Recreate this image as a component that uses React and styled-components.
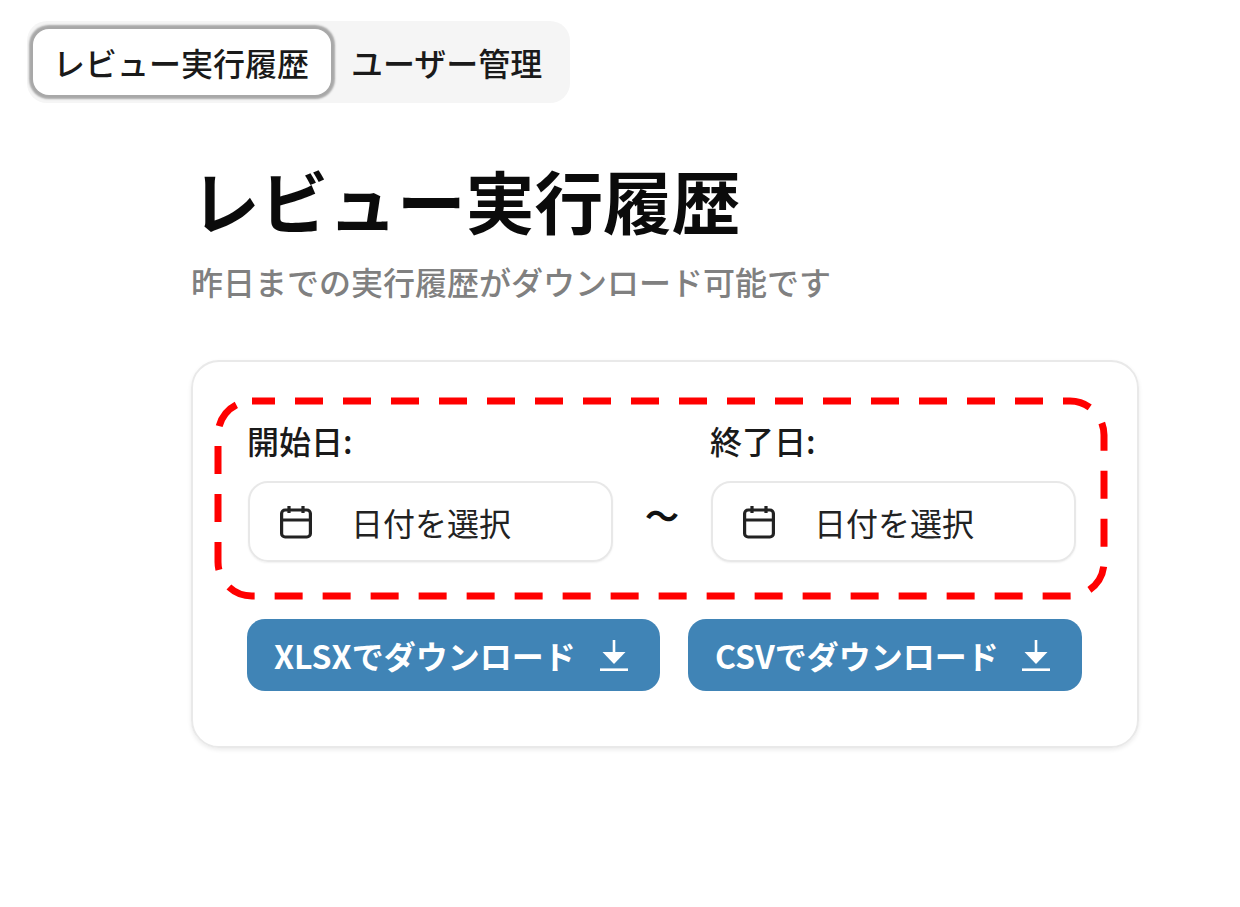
import styled, { createGlobalStyle } from "styled-components";

const GlobalStyle = createGlobalStyle`
  html, body {
    margin: 0;
    padding: 0;
    background: #fff;
    font-family: "Noto Sans CJK JP", "Noto Sans", sans-serif;
    color: #111;
  }
`;

const Page = styled.div`
  width: 1240px;
  height: 907px;
  padding: 21px 0 0 27px;
  box-sizing: border-box;
  overflow: hidden;
`;

const TabList = styled.div`
  display: inline-flex;
  align-items: center;
  height: 82px;
  width: 543px;
  box-sizing: border-box;
  padding: 0 6px;
  background: #f5f5f5;
  border-radius: 20px;
`;

const Tab = styled.button`
  display: flex;
  align-items: center;
  justify-content: center;
  height: ${(p) => (p.$active ? "66px" : "72px")};
  width: ${(p) => (p.$active ? "298px" : "auto")};
  padding: ${(p) => (p.$active ? "0 2px 0 0" : "0 0 0 20px")};
  border: none;
  border-radius: 16px;
  background: ${(p) => (p.$active ? "#fff" : "transparent")};
  box-shadow: ${(p) => (p.$active ? "0 0 2px 4px #a8a8a8" : "none")};
  box-sizing: border-box;
  font: 500 32px/1 "Noto Sans CJK JP", sans-serif;
  color: #1a1a1a;
  white-space: nowrap;
`;

const Content = styled.main`
  width: 948px;
  margin: 46px 0 0 164px;
`;

const Title = styled.h1`
  margin: 0;
  font: 700 68.7px/100px "Noto Sans CJK JP", sans-serif;
  color: #0b0b0b;
`;

const Subtitle = styled.p`
  margin: 9px 0 0;
  font: 500 32px/46px "Noto Sans CJK JP", sans-serif;
  color: #808080;
`;

const Card = styled.section`
  position: relative;
  box-sizing: border-box;
  height: 388px;
  margin-top: 56px;
  padding: 56px 0 0 55px;
  border: 2px solid #e9e9e9;
  border-radius: 28px;
  box-shadow: 0 2px 4px rgba(0, 0, 0, 0.08);
`;

const DateRow = styled.div`
  display: flex;
  align-items: flex-end;
`;

const Field = styled.div`
  display: flex;
  flex-direction: column;
  width: 365px;
`;

const Label = styled.label`
  font: 500 32px/44px "Noto Sans CJK JP", sans-serif;
  color: #1a1a1a;
  margin-left: -1px;
  margin-bottom: 19px;
`;

const DateInput = styled.div`
  display: flex;
  align-items: center;
  gap: 39px;
  box-sizing: border-box;
  height: 81px;
  padding: 0 0 0 30px;
  border: 2px solid #e8e8e8;
  border-radius: 20px;
  box-shadow: 0 1px 2px rgba(0, 0, 0, 0.06);
  font: 400 32px/1 "Noto Sans CJK JP", sans-serif;
  color: #222;
`;

const Tilde = styled.span`
  width: 98px;
  height: 81px;
  display: flex;
  justify-content: center;
  align-items: center;
  font: 700 34px/1 "Noto Sans CJK JP", sans-serif;
  color: #111;
  padding-bottom: 14px;
  box-sizing: border-box;
`;

const ButtonRow = styled.div`
  display: flex;
  gap: 28px;
  margin-top: 57px;
  margin-left: -1px;
`;

const DownloadButton = styled.button`
  display: flex;
  align-items: center;
  justify-content: space-between;
  box-sizing: border-box;
  width: ${(p) => p.$width}px;
  height: 72px;
  padding: 0 32px 0 27px;
  border: none;
  border-radius: 18px;
  background: #4084b6;
  color: #fff;
  font: 700 32px/1 "Noto Sans CJK JP", sans-serif;
  white-space: nowrap;
`;

const Annotation = styled.svg`
  position: absolute;
  left: -193px;
  top: -362px;
  width: 1240px;
  height: 907px;
  pointer-events: none;
`;

function CalendarIcon() {
  return (
    <svg width="32" height="34" viewBox="0 0 32 34" fill="none" stroke="#222" strokeWidth="3.2">
      <rect x="1.6" y="5" width="28.8" height="27" rx="3.5" />
      <path d="M9 1v7M23 1v7M1.6 15h28.8" />
    </svg>
  );
}

function DownloadIcon() {
  return (
    <svg width="28" height="31" viewBox="0 0 28 31" fill="#fff">
      <rect x="12.7" y="0" width="2.6" height="14" />
      <path d="M2.5 12h23L14 24z" />
      <rect x="0" y="28.4" width="28" height="2.6" />
    </svg>
  );
}

export default function App() {
  return (
    <>
      <GlobalStyle />
      <Page>
        <TabList>
          <Tab $active>レビュー実行履歴</Tab>
          <Tab>ユーザー管理</Tab>
        </TabList>
        <Content>
          <Title>レビュー実行履歴</Title>
          <Subtitle>昨日までの実行履歴がダウンロード可能です</Subtitle>
          <Card>
            <DateRow>
              <Field>
                <Label>開始日:</Label>
                <DateInput>
                  <CalendarIcon />
                  日付を選択
                </DateInput>
              </Field>
              <Tilde>〜</Tilde>
              <Field>
                <Label>終了日:</Label>
                <DateInput>
                  <CalendarIcon />
                  日付を選択
                </DateInput>
              </Field>
            </DateRow>
            <ButtonRow>
              <DownloadButton $width={413}>
                XLSXでダウンロード
                <DownloadIcon />
              </DownloadButton>
              <DownloadButton $width={394}>
                CSVでダウンロード
                <DownloadIcon />
              </DownloadButton>
            </ButtonRow>
            <Annotation viewBox="0 0 1240 907" fill="none">
              <path
                d="M252 401H1070A34 34 0 0 1 1104 435V562A34 34 0 0 1 1070 596H252A34 34 0 0 1 218 562V435A34 34 0 0 1 252 401Z"
                stroke="#ff0000"
                strokeWidth="7"
                strokeDasharray="28 20"
                strokeDashoffset="5"
              />
            </Annotation>
          </Card>
        </Content>
      </Page>
    </>
  );
}
